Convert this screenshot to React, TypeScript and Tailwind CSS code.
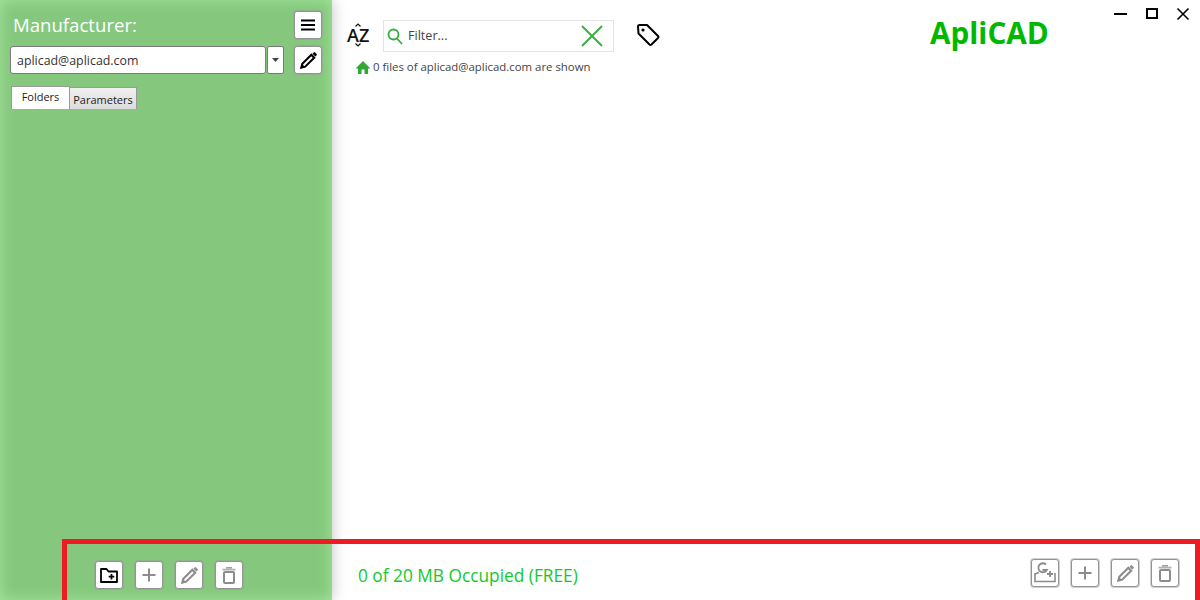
import React from 'react';

const IconButton = ({ children }: { children: React.ReactNode }) => (
  <button className="w-[28px] h-[28px] flex items-center justify-center bg-white rounded-[3px] border border-[#949494] shadow-[0_0_0_1px_rgba(150,150,150,0.45)]">
    {children}
  </button>
);

const Pencil = ({ color = '#8c8c8c' }: { color?: string }) => (
  <svg width="19" height="19" viewBox="0 0 20 20">
    <path d="M2.500 17.500l1-4L13 4l3 3-9.500 9.500z" fill="none" stroke={color} strokeWidth="2.200" strokeLinejoin="miter" />
    <path d="M14.200 2.800l1.300-1.300a1 1 0 0 1 1.400 0l1.600 1.600a1 1 0 0 1 0 1.400l-1.300 1.300z" fill={color} />
    <path d="M1.500 18.500l1.300-5.200 3.900 3.900z" fill={color} />
  </svg>
);

const Plus = () => (
  <svg width="14" height="14" viewBox="0 0 14 14">
    <path d="M7 0.500v13M0.500 7h13" stroke="#8c8c8c" strokeWidth="2" />
  </svg>
);

const Trash = () => (
  <svg width="14" height="17" viewBox="0 0 14 17">
    <path d="M0.500 2.600h13" stroke="#b0b0b0" strokeWidth="1.800" />
    <path d="M4 0.800h6" stroke="#a0a0a0" strokeWidth="1.600" />
    <rect x="2" y="5" width="10" height="11" rx="1" fill="none" stroke="#8c8c8c" strokeWidth="2" />
  </svg>
);

const FolderPlus = () => (
  <svg width="18" height="15" viewBox="0 0 18 15">
    <path d="M1 14V1h5.500l2 2.500H17V14z" fill="none" stroke="#000" strokeWidth="1.800" strokeLinejoin="round" />
    <path d="M11.500 6v5.500M8.700 8.700h5.600" stroke="#000" strokeWidth="1.800" />
  </svg>
);

const DriveAdd = () => (
  <svg width="24" height="22" viewBox="0 0 24 22">
    <path d="M2 11v8.500h20V11" fill="none" stroke="#8c8c8c" strokeWidth="1.600" />
    <path d="M2 12l4-1.500" stroke="#8c8c8c" strokeWidth="1.600" />
    <path d="M13 2.500a4.500 4.500 0 1 0 .8 5.500H9.500" fill="none" stroke="#8c8c8c" strokeWidth="1.800" />
    <path d="M17 9v6M14 12h6" stroke="#8c8c8c" strokeWidth="1.800" />
  </svg>
);

const App: React.FC = () => {
  return (
    <div className="relative w-[1200px] h-[600px] overflow-hidden bg-white flex font-['Open_Sans','Noto_Sans',sans-serif] text-[#333]">
      {/* Left panel */}
      <aside className="w-[332px] h-full shrink-0 flex flex-col bg-[#85c87d] shadow-[inset_0_0_14px_#a5e89d,0_0_14px_rgba(0,0,0,0.25)] pl-[10px] pr-[10px] pt-[11px] pb-[11px]">
        <div className="flex justify-between items-start h-[28px]">
          <span className="pl-[3px] text-[18.600px] leading-[28px] text-white">Manufacturer:</span>
          <IconButton>
            <svg width="14" height="12" viewBox="0 0 14 12">
              <path d="M0 1.500h14M0 6h14M0 10.500h14" stroke="#000" strokeWidth="2" />
            </svg>
          </IconButton>
        </div>

        <div className="flex justify-between mt-[7px] h-[28px]">
          <div className="flex">
            <div className="w-[256px] h-[28px] bg-white border border-[#7a7a7a] rounded-[3px] pl-[6px] text-[12.400px] leading-[27px]">
              aplicad@aplicad.com
            </div>
            <div className="ml-[1px] w-[17px] h-[28px] bg-white border border-[#7a7a7a] rounded-[2px] flex items-center justify-center">
              <svg width="7" height="4" viewBox="0 0 7 4">
                <path d="M0 0h7L3.500 4z" fill="#444" />
              </svg>
            </div>
          </div>
          <IconButton>
            <Pencil color="#000" />
          </IconButton>
        </div>

        <div className="flex mt-[12px] ml-[1px] items-end h-[23px] text-[11px]">
          <div className="w-[59px] h-[23px] bg-white border-t border-l border-r border-[#9a9a9a] text-center leading-[19px] text-[#222]">
            Folders
          </div>
          <div className="w-[67px] h-[22px] bg-gradient-to-b from-[#f0f0f0] to-[#dcdcdc] border-t border-r border-[#9a9a9a] text-center leading-[23px] text-[#222]">
            Parameters
          </div>
        </div>

        <div className="mt-auto ml-[85px] flex gap-[12px]">
          <IconButton>
            <FolderPlus />
          </IconButton>
          <IconButton>
            <Plus />
          </IconButton>
          <IconButton>
            <Pencil />
          </IconButton>
          <IconButton>
            <Trash />
          </IconButton>
        </div>
      </aside>

      {/* Main area */}
      <main className="flex-1 flex flex-col">
        <div className="flex items-start h-[52px] pt-[20px] pl-[15px]">
          <div className="w-[36px] h-[32px] flex flex-col items-start">
            <svg width="22" height="4" viewBox="0 0 22 4" className="mt-[3px]">
              <path d="M8.500 3.500L11 1l2.500 2.500" fill="none" stroke="#111" strokeWidth="1.200" />
            </svg>
            <span className="w-[23px] h-[16px] text-[18px] leading-[16px] text-[#111] font-semibold">AZ</span>
            <svg width="22" height="4" viewBox="0 0 22 4">
              <path d="M8.500 0.500L11 3l2.500-2.500" fill="none" stroke="#111" strokeWidth="1.200" />
            </svg>
          </div>
          <div className="w-[231px] h-[32px] border border-[#e4e4e4] flex items-center pl-[3px] pr-[9px]">
            <svg width="16" height="17" viewBox="0 0 16 17">
              <circle cx="6.500" cy="6.500" r="5" fill="none" stroke="#33ad3b" strokeWidth="1.800" />
              <path d="M10 10.500l5 5.500" stroke="#33ad3b" strokeWidth="1.800" />
            </svg>
            <span className="ml-[5px] text-[12.600px] text-[#444]">Filter...</span>
            <svg width="24" height="24" viewBox="0 0 24 24" className="ml-auto">
              <path d="M2 2l20 20M22 2L2 22" stroke="#33ad3b" strokeWidth="1.800" />
            </svg>
          </div>
          <svg width="24" height="24" viewBox="0 0 24 24" className="ml-[22px] mt-[3px]">
            <path d="M2 3.500Q2 2 3.500 2H11l11 11a1.500 1.500 0 0 1 0 2l-6.500 6.500a1.500 1.500 0 0 1-2 0L2.500 10.500z" fill="none" stroke="#000" strokeWidth="2" strokeLinejoin="round" />
            <circle cx="7" cy="7" r="1.600" fill="#000" />
          </svg>
          <span className="ml-[270px] -mt-[6px] text-[29.700px] leading-[38px] font-bold text-[#00b800]">ApliCAD</span>
          <div className="ml-auto -mt-[16px] pr-[10px] flex gap-[17px] items-center h-[20px]">
            <svg width="14" height="14" viewBox="0 0 14 14">
              <path d="M0 7h13" stroke="#000" strokeWidth="2" />
            </svg>
            <svg width="14" height="14" viewBox="0 0 14 14">
              <rect x="2" y="2" width="10" height="9" fill="none" stroke="#000" strokeWidth="2" />
            </svg>
            <svg width="14" height="14" viewBox="0 0 14 14">
              <path d="M1.500 1.500l11 11M12.500 1.500l-11 11" stroke="#000" strokeWidth="1.600" />
            </svg>
          </div>
        </div>

        <div className="flex items-center pl-[24px] mt-[6px] h-[18px] text-[11.400px] text-[#444]">
          <svg width="14" height="13" viewBox="0 0 14 13">
            <path d="M7 0L-0.500 7.500h2.500V13h3.500V8.500h3V13H12V7.500h2.500z" fill="#2fa836" />
          </svg>
          <span className="ml-[3px]">0 files of aplicad@aplicad.com are shown</span>
        </div>

        <div className="mt-auto h-[64px] flex items-start pt-[23px] pl-[26px] pr-[21px] justify-between">
          <span className="text-[17.300px] leading-[26px] mt-[4px] text-[#12c92a]">0 of 20 MB Occupied (FREE)</span>
          <div className="flex gap-[12px]">
            <IconButton>
              <DriveAdd />
            </IconButton>
            <IconButton>
              <Plus />
            </IconButton>
            <IconButton>
              <Pencil />
            </IconButton>
            <IconButton>
              <Trash />
            </IconButton>
          </div>
        </div>
      </main>

      {/* Red annotation frame */}
      <div className="absolute left-[62px] top-[539px] right-0 bottom-0 border-t-[5px] border-l-[5px] border-r-[5px] border-[#ed1c24]" />
    </div>
  );
};

export default App;
